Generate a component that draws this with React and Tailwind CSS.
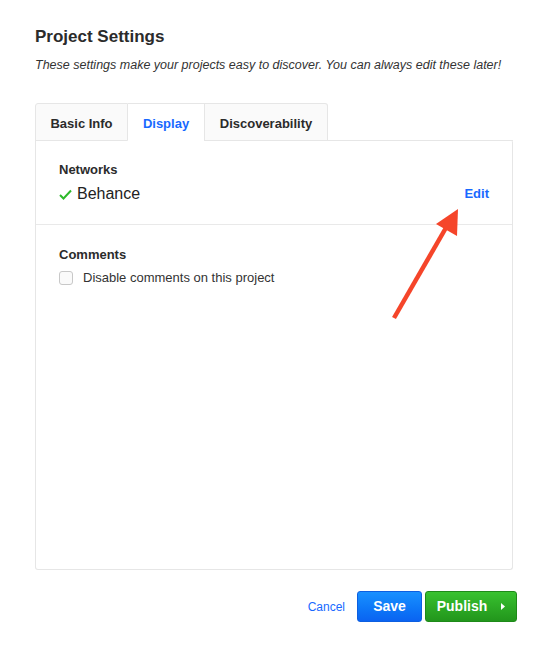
// ==============================
// Project Settings Dialog
// ==============================
const TABS = [
  { label: "Basic Info", w: "w-[93px]" },
  { label: "Display", w: "w-[77px]" },
  { label: "Discoverability", w: "w-[123px]" },
];

export default function App() {
  const active = "Display";

  return (
    <div
      className="relative w-[551px] h-[651px] bg-white text-[#333]"
      style={{ fontFamily: '"Liberation Sans", Arial, sans-serif' }}
    >
      <div className="pl-[35px] pr-[38px] pt-[27px]">
        {/* -------- Header -------- */}
        <h1 className="text-[17px] font-bold leading-[20px] text-[#2b2b2b]">
          Project Settings
        </h1>
        <p className="mt-[9px] text-[12.5px] italic leading-[18px] text-[#333] whitespace-nowrap">
          These settings make your projects easy to discover. You can always edit these later!
        </p>

        {/* -------- Tabs -------- */}
        <div className="mt-[29px] flex">
          {TABS.map((t, i) => (
            <div
              key={t.label}
              className={
                "h-[38px] flex items-center justify-center text-[13px] font-bold border-t border-r border-[#e6e6e6] " +
                t.w +
                " " +
                (i === 0 ? "border-l rounded-tl-[3px] " : "") +
                (i === TABS.length - 1 ? "rounded-tr-[3px] " : "") +
                (t.label === active
                  ? "text-[#1769ff] bg-white pt-[3px]"
                  : "text-[#2b2b2b] bg-[#fafafa] border-b pt-[3px]")
              }
            >
              {t.label}
            </div>
          ))}
        </div>

        {/* -------- Panel -------- */}
        <div className="-mt-px h-[430px] border border-[#e6e6e6] rounded-b-[3px] rounded-tr-[3px] border-t-0 relative">
          <div className="absolute top-0 left-[292px] right-[-1px] h-px bg-[#e6e6e6]" />
          <div className="px-[23px] pt-[22px] pb-[20px] border-b border-[#e9e9e9]">
            <div className="text-[13px] font-bold leading-[16px] text-[#2b2b2b]">Networks</div>
            <div className="mt-[6px] flex items-center justify-between">
              <div className="flex items-center gap-[5px]">
                <svg width="13" height="11" viewBox="0 0 13 11">
                  <path d="M1 6 L4.5 9.5 L12 1.5" fill="none" stroke="#2db92a" strokeWidth="2" />
                </svg>
                <span className="text-[16px] leading-[20px] text-[#222]">Behance</span>
              </div>
              <span className="text-[13px] font-bold text-[#1769ff]">Edit</span>
            </div>
          </div>

          <div className="px-[23px] pt-[22px]">
            <div className="text-[13px] font-bold leading-[16px] text-[#2b2b2b]">Comments</div>
            <label className="mt-[5px] flex items-center gap-[10px]">
              <span className="w-[14px] h-[14px] rounded-[3px] border border-[#c8c8c8] bg-[#fafafa]" />
              <span className="text-[13px] text-[#333]">Disable comments on this project</span>
            </label>
          </div>
        </div>

        {/* -------- Footer -------- */}
        <div className="mt-[21px] flex items-center justify-end gap-[3px] -mr-[4px]">
          <span className="text-[12px] text-[#1769ff] mr-[9px]">Cancel</span>
          <button className="h-[31px] w-[65px] rounded-[3px] border border-[#0d5fe0] bg-gradient-to-b from-[#1a90ff] to-[#0b63f1] text-white text-[14px] font-bold">
            Save
          </button>
          <button className="h-[31px] w-[92px] rounded-[3px] border border-[#1e8a19] bg-gradient-to-b from-[#38c22f] to-[#22961c] text-white text-[14px] font-bold flex items-center justify-center gap-[14px]">
            Publish
            <svg width="4" height="7" viewBox="0 0 4 7">
              <path d="M0 0 L4 3.5 L0 7 Z" fill="white" />
            </svg>
          </button>
        </div>
      </div>

      {/* -------- Annotation arrow -------- */}
      <svg className="absolute left-0 top-0 pointer-events-none" width="551" height="651">
        <line x1="394" y1="318" x2="447" y2="226" stroke="#f5452a" strokeWidth="4.5" />
        <polygon points="458,209 436,224 457,236" fill="#f5452a" />
      </svg>
    </div>
  );
}
